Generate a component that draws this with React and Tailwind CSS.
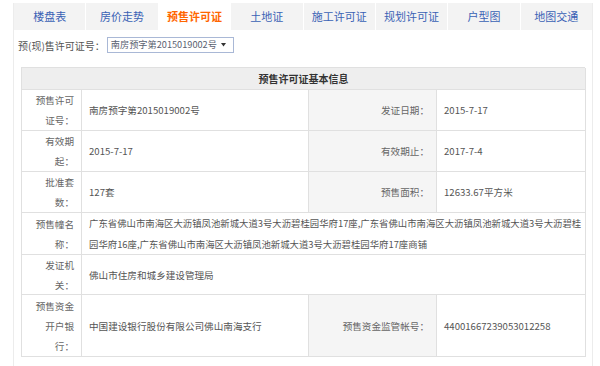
import React from "react";

const tabs = ["楼盘表", "房价走势", "预售许可证", "土地证", "施工许可证", "规划许可证", "户型图", "地图交通"];

const cell = "border-r border-b border-[#e0e0e0] flex items-center";

function L({ lines }) {
  return (
    <div className={cell + " justify-end pr-[7px] text-[#666]"}>
      <div className="text-right">
        {lines.map((l, i) => (
          <div key={i} className="whitespace-nowrap">{l}</div>
        ))}
      </div>
    </div>
  );
}

function V({ children, span }) {
  return <div className={cell + " pl-[7px] whitespace-nowrap " + (span ? "col-span-3" : "")}>{children}</div>;
}

function K({ children }) {
  return <div className={cell + " justify-end pr-[7px] bg-[#f5f5f5] text-[#666] whitespace-nowrap"}>{children}</div>;
}

export default function App() {
  return (
    <div className="w-[600px] h-[366px] bg-white font-['Noto_Sans_CJK_SC','Microsoft_YaHei',sans-serif] overflow-hidden">
      <div className="ml-[13px] w-[580px] mt-[3px] h-[363px] border-x border-[#ececec]">
        <div className="flex h-[27px] bg-[#f3f3f3]">
          {tabs.map((t, i) => (
            <div
              key={t}
              className={
                "flex-1 flex items-center justify-center text-[11px] border-r border-white last:border-r-0 " +
                (i === 2 ? "bg-white text-[#ff6600] font-bold" : "text-[#3a62b5]")
              }
            >
              {t}
            </div>
          ))}
        </div>
        <div className="flex items-center h-[16px] mt-[7px] pl-[4px] text-[10px] text-[#555]">
          <span>预(现)售许可证号：</span>
          <div className="ml-[2px] h-[16px] w-[127px] border border-[#a9b8d6] flex items-center pl-[3px] text-[9.2px] text-[#5a6170]">
            <span className="whitespace-nowrap">南房预字第2015019002号</span>
            <svg className="ml-[4px] shrink-0" width="5" height="4" viewBox="0 0 5 4">
              <path d="M0 0H5L2.5 3.5Z" fill="#333" />
            </svg>
          </div>
        </div>
        <div className="ml-[7px] mt-[14px] w-[564px] grid grid-cols-[60px_227px_128px_149px] grid-rows-[22px_41px_41px_41px_42px_40px_62px] border-l border-t border-[#e0e0e0] text-[9.6px] leading-[20px] text-[#555]">
          <div className={cell + " col-span-4 justify-center bg-[#eeeeee] font-bold text-[#333] text-[10px]"}>
            预售许可证基本信息
          </div>

          <L lines={["预售许可", "证号："]} />
          <V>南房预字第2015019002号</V>
          <K>发证日期：</K>
          <V>2015-7-17</V>

          <L lines={["有效期", "起："]} />
          <V>2015-7-17</V>
          <K>有效期止：</K>
          <V>2017-7-4</V>

          <L lines={["批准套", "数："]} />
          <V>127套</V>
          <K>预售面积：</K>
          <V>12633.67平方米</V>

          <L lines={["预售幢名", "称："]} />
          <div className={cell + " col-span-3 pl-[7px] text-[9.4px] leading-[21px] overflow-hidden"}>
            <div>
              <div className="whitespace-nowrap">广东省佛山市南海区大沥镇凤池新城大道3号大沥碧桂园华府17座,广东省佛山市南海区大沥镇凤池新城大道3号大沥碧桂</div>
              <div className="whitespace-nowrap">园华府16座,广东省佛山市南海区大沥镇凤池新城大道3号大沥碧桂园华府17座商铺</div>
            </div>
          </div>

          <L lines={["发证机", "关："]} />
          <V span>佛山市住房和城乡建设管理局</V>

          <L lines={["预售资金", "开户银", "行："]} />
          <V>中国建设银行股份有限公司佛山南海支行</V>
          <K>预售资金监管帐号：</K>
          <V>44001667239053012258</V>
        </div>
      </div>
    </div>
  );
}
